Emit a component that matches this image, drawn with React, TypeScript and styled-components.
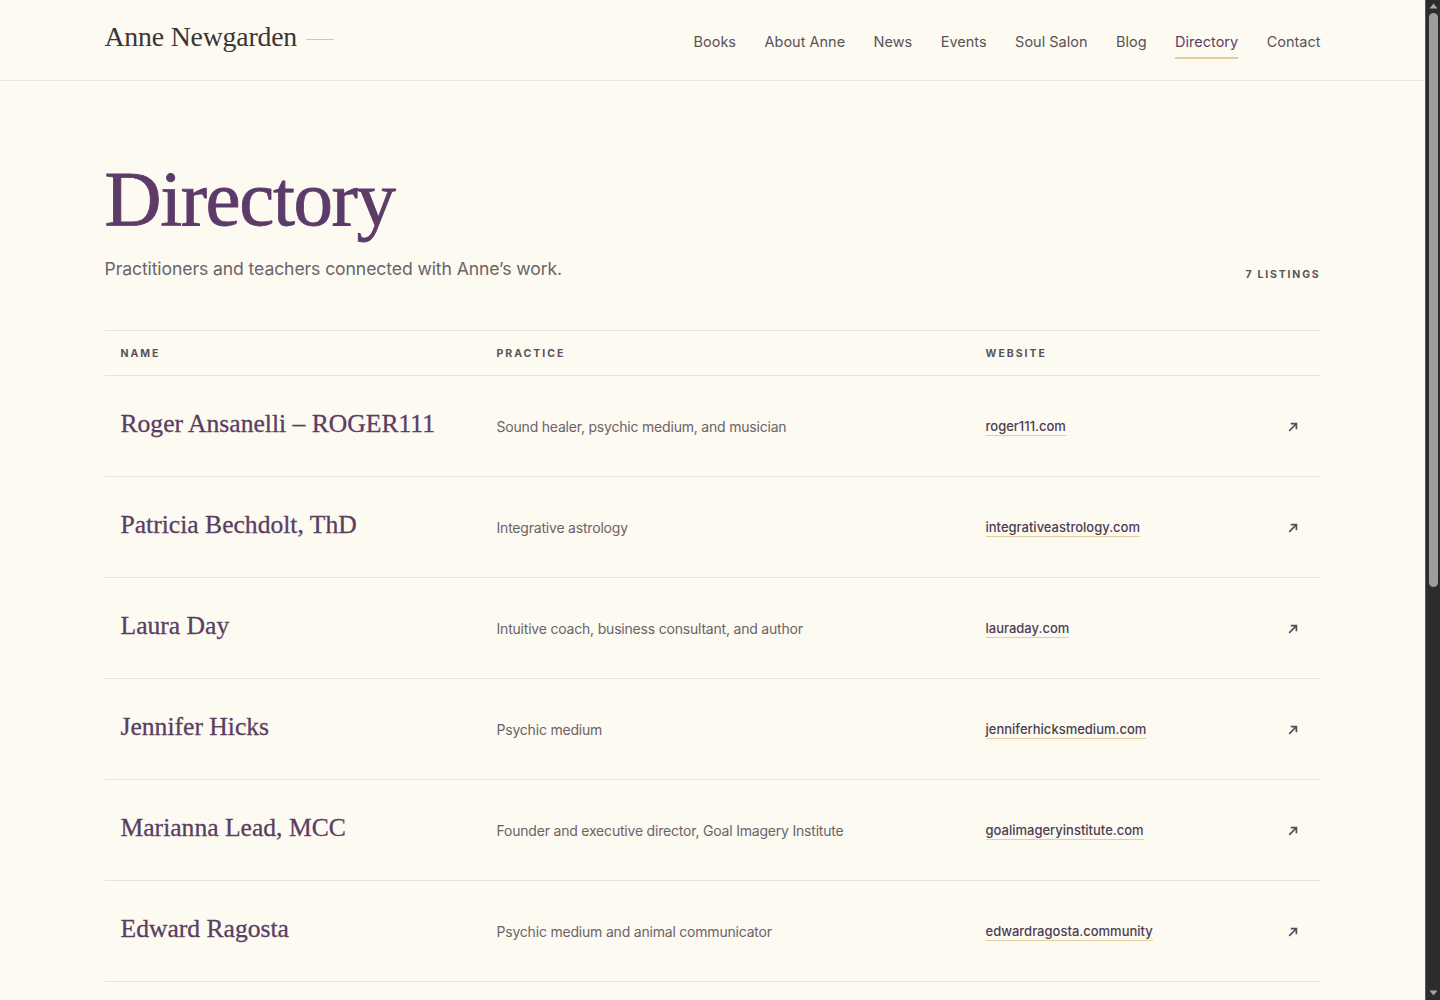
import React from "react";
import styled, { createGlobalStyle } from "styled-components";

const GlobalStyle = createGlobalStyle`
  body {
    margin: 0;
    background: #fdfaf2;
    color: #4a4347;
    font-family: "Inter", "Liberation Sans", sans-serif;
  }
  * { box-sizing: border-box; }
`;

const SERIF = `"Liberation Serif", "DejaVu Serif", serif`;
const SANS = `"Inter", "Liberation Sans", sans-serif`;

const Shell = styled.div`
  display: flex;
  align-items: flex-start;
`;

const Page = styled.div`
  flex: 1;
  min-width: 0;
`;

/* browser scrollbar, as it shows in the shot */
const ScrollTrack = styled.div`
  position: sticky;
  top: 0;
  flex: none;
  width: 15px;
  height: 100vh;
  background: #2c2c2c;
  border-left: 1px solid #5a5a5a;
  display: flex;
  flex-direction: column;
  align-items: center;
  padding: 3px 0 4px;
`;

const ScrollThumb = styled.div`
  width: 9px;
  height: 574px;
  margin-top: 4px;
  border-radius: 5px;
  background: #9d9d9d;
`;

const ScrollSpacer = styled.div`
  flex: 1;
`;

const ScrollArrow = styled.svg`
  width: 9px;
  height: 6px;
  color: #a8a8a8;
`;

const Header = styled.header`
  height: 81px;
  border-bottom: 1px solid #ece6da;
`;

const Bar = styled.div`
  max-width: 1216px;
  margin: 0 auto;
  height: 100%;
  display: flex;
  align-items: center;
  justify-content: space-between;
`;

const Logo = styled.a`
  display: flex;
  align-items: center;
  gap: 9px;
  font-family: ${SERIF};
  font-size: 27.8px;
  letter-spacing: -0.2px;
  color: #3b3536;
  text-decoration: none;
  margin-top: -6px;
  &::after {
    content: "";
    width: 28px;
    height: 1px;
    background: #d9c79c;
    margin-top: 4px;
  }
`;

const Nav = styled.nav`
  display: flex;
  gap: 28.5px;
  margin-top: 2px;
`;

const NavLink = styled.a<{ $active?: boolean }>`
  position: relative;
  font-family: ${SANS};
  font-size: 14.5px;
  color: ${(p) => (p.$active ? "#5e3f67" : "#5a5257")};
  text-decoration: none;
  padding: 6px 0;
  &::after {
    content: "";
    position: absolute;
    left: 0;
    right: 0;
    bottom: -3px;
    height: 2px;
    background: ${(p) => (p.$active ? "#e0cc9c" : "transparent")};
  }
`;

const Main = styled.main`
  max-width: 1216px;
  margin: 0 auto;
  padding: 78px 0 560px;
`;

const Title = styled.h1`
  margin: 0;
  font-family: ${SERIF};
  font-weight: 400;
  font-size: 79px;
  letter-spacing: -1.4px;
  line-height: 1;
  color: #5c3b69;
  -webkit-text-stroke: 0.8px #5c3b69;
`;

const Intro = styled.div`
  display: flex;
  justify-content: space-between;
  align-items: flex-end;
  margin-top: 20px;
  padding-bottom: 51px;
  border-bottom: 1px solid #e8e2d6;
`;

const Lead = styled.p`
  margin: 0;
  font-family: ${SANS};
  font-size: 17.6px;
  letter-spacing: -0.1px;
  color: #6b6367;
`;

const Count = styled.span`
  font-family: ${SANS};
  font-size: 10.5px;
  font-weight: 700;
  letter-spacing: 1.8px;
  color: #5a5257;
  margin-bottom: -2px;
`;

const Row = styled.div<{ $head?: boolean }>`
  display: grid;
  grid-template-columns: 376px 489px 1fr 56px;
  align-items: center;
  height: ${(p) => (p.$head ? "45px" : "101px")};
  padding-left: 16px;
  border-bottom: 1px solid #e8e2d6;
`;

const HeadCell = styled.span`
  font-family: ${SANS};
  font-size: 10.5px;
  font-weight: 700;
  letter-spacing: 2px;
  color: #5a5257;
`;

const Name = styled.span`
  font-family: ${SERIF};
  font-size: 25.6px;
  color: #5a3e62;
  -webkit-text-stroke: 0.3px #5a3e62;
  margin-top: -4px;
`;

const Practice = styled.span`
  font-family: ${SANS};
  font-size: 14px;
  letter-spacing: -0.2px;
  color: #6b6367;
`;

const Site = styled.a`
  justify-self: start;
  margin-top: 2px;
  font-family: ${SANS};
  font-size: 13px;
  font-weight: 500;
  color: #4c3d52;
  text-decoration: none;
  border-bottom: 1px solid #e3cf9f;
  padding-bottom: 1px;
`;

const Arrow = styled.svg`
  justify-self: center;
  margin-top: 1px;
  width: 12px;
  height: 12px;
  color: #5a4a60;
`;

const listings = [
  ["Roger Ansanelli – ROGER111", "Sound healer, psychic medium, and musician", "roger111.com"],
  ["Patricia Bechdolt, ThD", "Integrative astrology", "integrativeastrology.com"],
  ["Laura Day", "Intuitive coach, business consultant, and author", "lauraday.com"],
  ["Jennifer Hicks", "Psychic medium", "jenniferhicksmedium.com"],
  ["Marianna Lead, MCC", "Founder and executive director, Goal Imagery Institute", "goalimageryinstitute.com"],
  ["Edward Ragosta", "Psychic medium and animal communicator", "edwardragosta.community"],
  ["Rev. Ellen Tadd", "Clairvoyant teacher and author", "ellentadd.com"],
];

const nav = ["Books", "About Anne", "News", "Events", "Soul Salon", "Blog", "Directory", "Contact"];

export default function App() {
  return (
    <>
      <GlobalStyle />
      <Shell>
        <Page>
          <Header>
            <Bar>
              <Logo href="#">Anne Newgarden</Logo>
              <Nav>
                {nav.map((n) => (
                  <NavLink key={n} href="#" $active={n === "Directory"}>
                    {n}
                  </NavLink>
                ))}
              </Nav>
            </Bar>
          </Header>
          <Main>
            <Title>Directory</Title>
            <Intro>
              <Lead>Practitioners and teachers connected with Anne’s work.</Lead>
              <Count>7 LISTINGS</Count>
            </Intro>
            <Row $head>
              <HeadCell>NAME</HeadCell>
              <HeadCell>PRACTICE</HeadCell>
              <HeadCell>WEBSITE</HeadCell>
              <span />
            </Row>
            {listings.map(([name, practice, site]) => (
              <Row key={name}>
                <Name>{name}</Name>
                <Practice>{practice}</Practice>
                <Site href="#">{site}</Site>
                <Arrow viewBox="0 0 12 12" fill="none" stroke="currentColor" strokeWidth="1.7">
                  <path d="M2.2 9.8 L9 3 M3.8 2.6 H9.4 V8.2" />
                </Arrow>
              </Row>
            ))}
          </Main>
        </Page>
        <ScrollTrack>
          <ScrollArrow viewBox="0 0 9 6" fill="currentColor">
            <path d="M4.5 0.5 L8.5 5.5 H0.5 Z" />
          </ScrollArrow>
          <ScrollThumb />
          <ScrollSpacer />
          <ScrollArrow viewBox="0 0 9 6" fill="currentColor">
            <path d="M0.5 0.5 H8.5 L4.5 5.5 Z" />
          </ScrollArrow>
        </ScrollTrack>
      </Shell>
    </>
  );
}
